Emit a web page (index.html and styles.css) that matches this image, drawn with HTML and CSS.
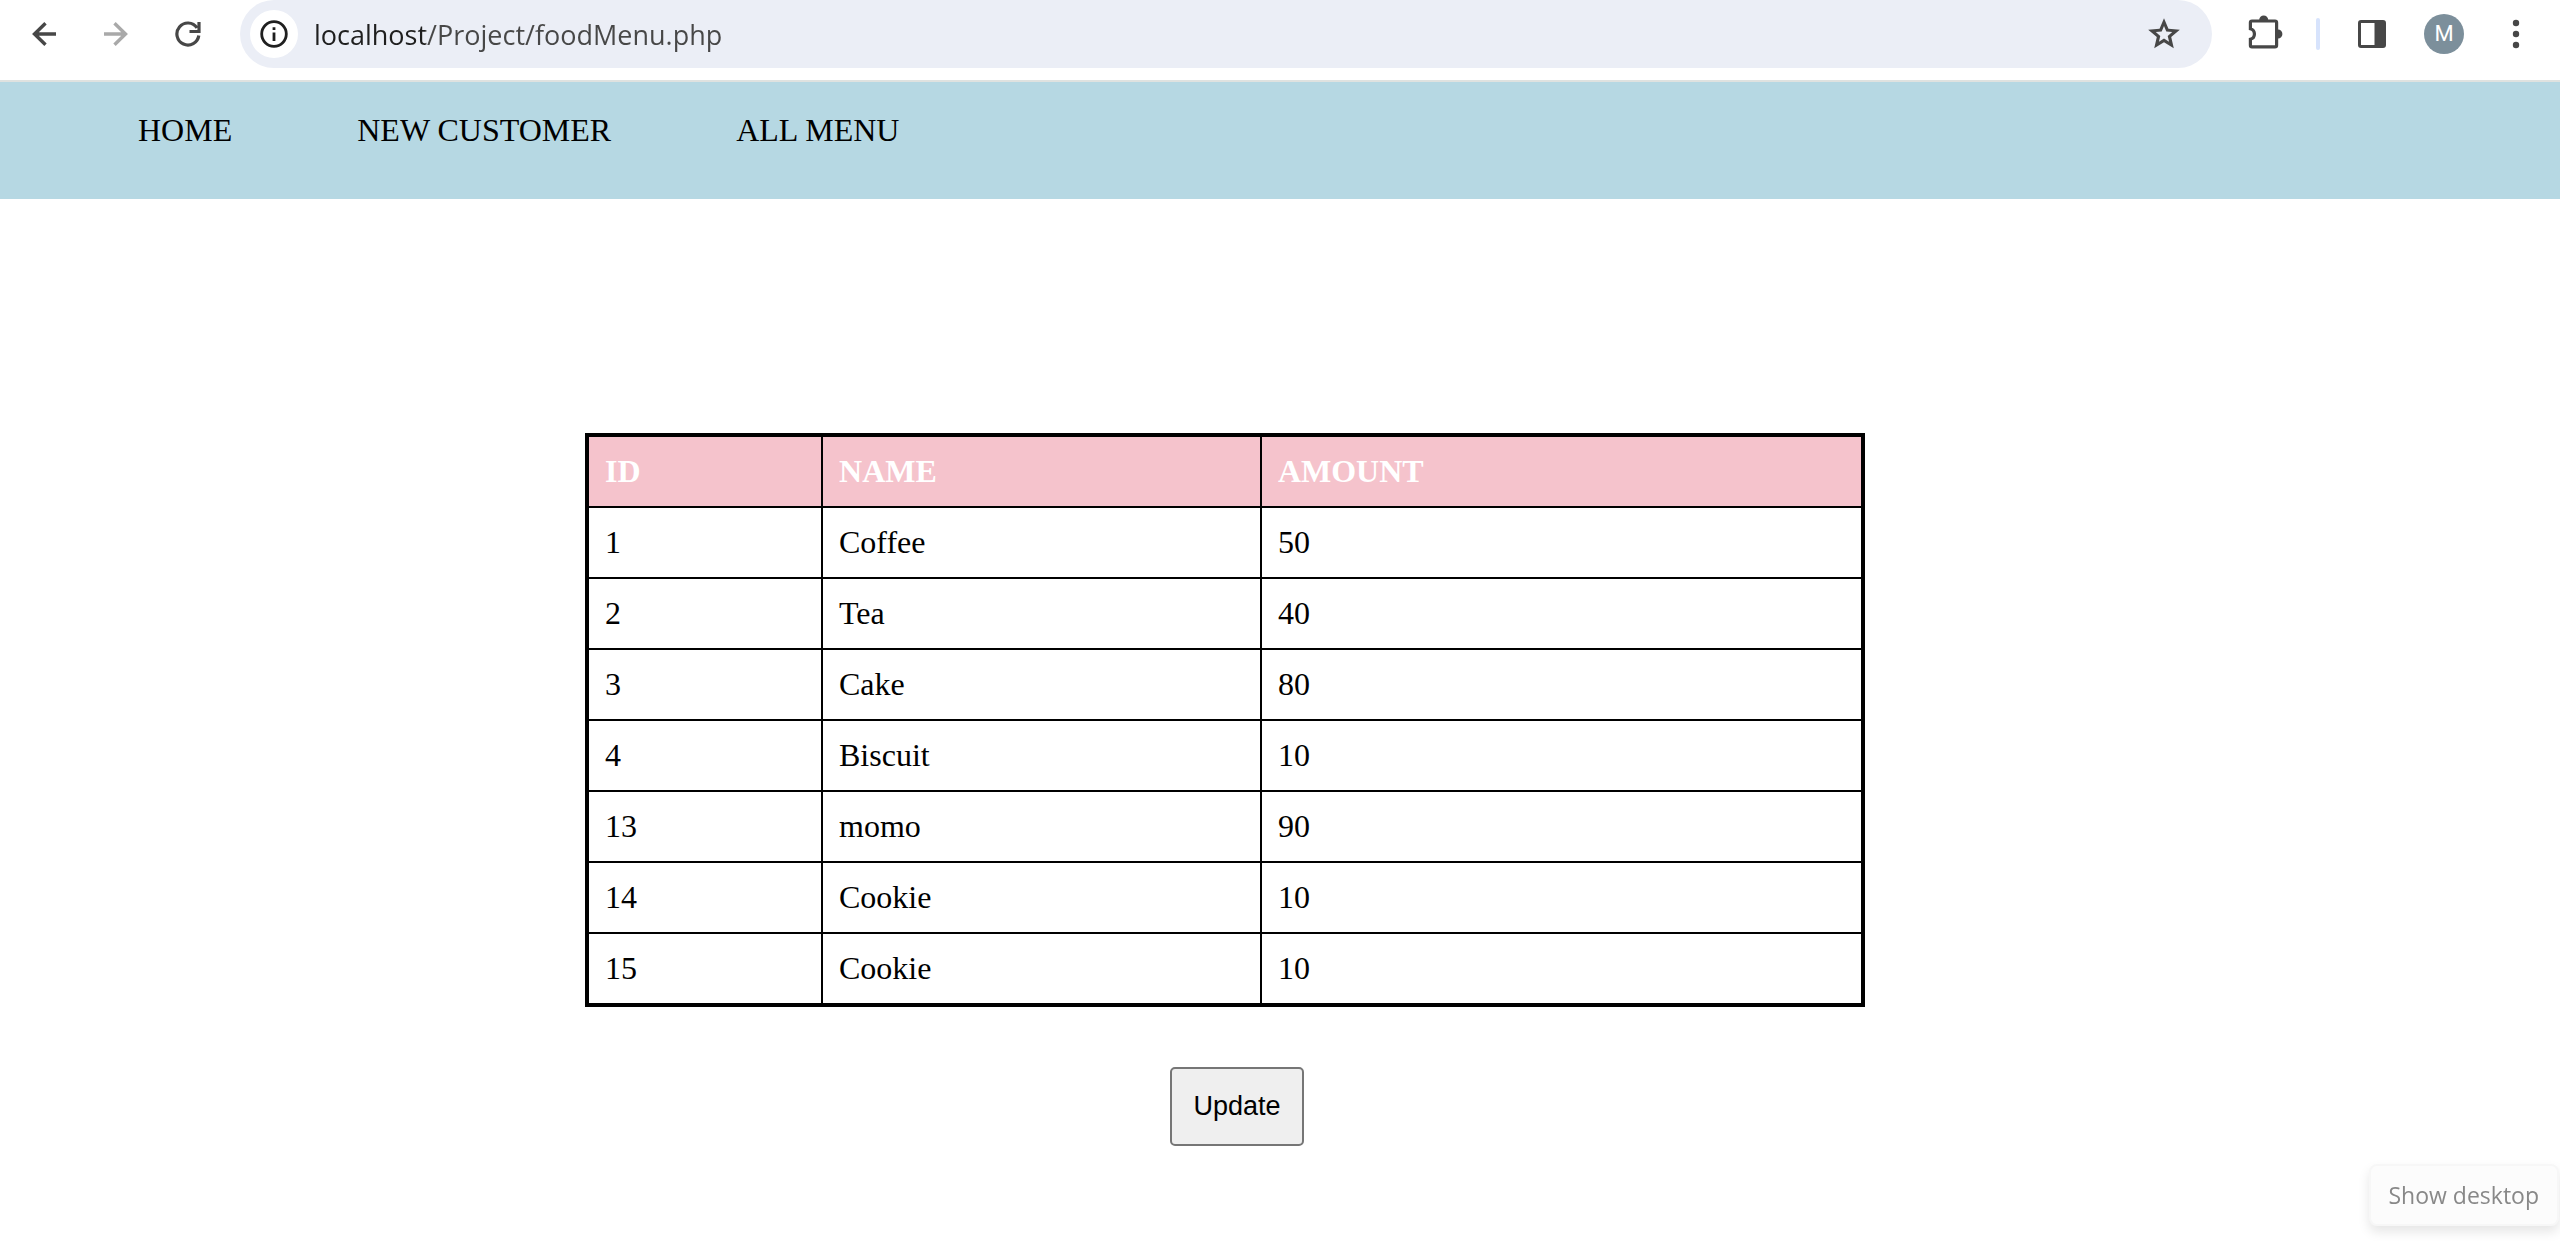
FILE: index.html
```html
<!DOCTYPE html>
<html lang="en">
<head>
<meta charset="utf-8">
<title>Food Menu</title>
<link rel="stylesheet" href="styles.css">
</head>
<body>
<header class="toolbar">
  <button class="tool" type="button" aria-label="Back">
    <svg width="24" height="24" viewBox="0 0 24 24" fill="none" stroke="#474747" stroke-width="3.400"><path d="M24 12H2M13.500 1.300L2.500 12l11 10.700"/></svg>
  </button>
  <button class="tool" type="button" aria-label="Forward">
    <svg width="24" height="24" viewBox="0 0 24 24" fill="none" stroke="#a9a9a9" stroke-width="3.400"><path d="M0 12h22M10.500 1.300l11 10.700-11 10.700"/></svg>
  </button>
  <button class="tool" type="button" aria-label="Reload">
    <svg width="26" height="26" viewBox="0 0 26 26" fill="none" stroke="#474747" stroke-width="3.200"><path d="M23.800 14.500A11 11 0 1 1 22 6.800M24 1v9.500H14.500"/></svg>
  </button>
  <div class="omnibox">
    <button class="site-info" type="button" aria-label="View site information">
      <svg width="28" height="28" viewBox="0 0 28 28"><circle cx="14" cy="14" r="12.300" fill="none" stroke="#1f1f1f" stroke-width="2.800"/><path d="M12.600 12.500h2.800V21h-2.800zM12.600 7.300h2.800v2.800h-2.800z" fill="#1f1f1f"/></svg>
    </button>
    <input class="address" type="text" aria-label="Address" value="localhost/Project/foodMenu.php">
    <button class="bookmark" type="button" aria-label="Bookmark this page">
      <svg width="38" height="38" viewBox="0 0 24 24"><path d="M22 9.240l-7.190-.62L12 2 9.190 8.630 2 9.240l5.460 4.730L5.820 21 12 17.270 18.180 21l-1.630-7.030L22 9.240zM12 14.900l-3.200 1.950.85-3.650-2.850-2.450 3.750-.33L12 6.950l1.450 3.470 3.750.33-2.850 2.450.85 3.650L12 14.900z" fill="#474747"/></svg>
    </button>
  </div>
  <button class="tool" type="button" aria-label="Extensions">
    <svg width="38" height="38" viewBox="0 0 38 38"><path d="M7 6H30q1.600 0 1.600 1.600V30.200q0 1.600-1.600 1.600H7q-1.600 0-1.600-1.600V24.300a5.500 5.500 0 0 0 0-10.600V7.600Q5.400 6 7 6z" fill="none" stroke="#474747" stroke-width="3.200"/><path d="M14.200 5a4.500 4.600 0 0 1 9 0zM33 14.500a4.400 4.500 0 0 1 0 9z" fill="#474747"/></svg>
  </button>
  <span class="divider"></span>
  <button class="tool" type="button" aria-label="Side panel">
    <svg width="30" height="30" viewBox="0 0 30 30"><rect x="2.500" y="2.500" width="25" height="25" rx="1.500" fill="none" stroke="#474747" stroke-width="3"/><path d="M17.500 2h10v26h-10z" fill="#474747"/></svg>
  </button>
  <button class="tool" type="button" aria-label="Profile"><span class="avatar">M</span></button>
  <button class="tool" type="button" aria-label="Browser menu">
    <svg width="8" height="30" viewBox="0 0 8 30" fill="#474747"><circle cx="4" cy="4" r="3.200"/><circle cx="4" cy="15" r="3.200"/><circle cx="4" cy="26" r="3.200"/></svg>
  </button>
</header>

<nav class="nav">
  <a href="#home">HOME</a>
  <a href="#customer">NEW CUSTOMER</a>
  <a href="#menu">ALL MENU</a>
</nav>

<main class="content">
  <table class="menu">
    <thead>
      <tr><th>ID</th><th>NAME</th><th>AMOUNT</th></tr>
    </thead>
    <tbody>
      <tr><td>1</td><td>Coffee</td><td>50</td></tr>
      <tr><td>2</td><td>Tea</td><td>40</td></tr>
      <tr><td>3</td><td>Cake</td><td>80</td></tr>
      <tr><td>4</td><td>Biscuit</td><td>10</td></tr>
      <tr><td>13</td><td>momo</td><td>90</td></tr>
      <tr><td>14</td><td>Cookie</td><td>10</td></tr>
      <tr><td>15</td><td>Cookie</td><td>10</td></tr>
    </tbody>
  </table>
  <button class="update" type="button">Update</button>
</main>

<div class="tooltip" role="tooltip">Show desktop</div>
</body>
</html>
```
FILE: styles.css
```css
* {
  box-sizing: border-box;
}

body {
  margin: 0;
  background: #fff;
  color: #000;
  font-family: "Liberation Serif", "Times New Roman", serif;
  font-size: 32px;
  line-height: 37px;
}

button {
  cursor: pointer;
}

/* Browser toolbar */
.toolbar {
  display: flex;
  align-items: center;
  padding: 0 8px 12px;
  border-bottom: 2px solid #dfe2e0;
}

.tool {
  display: flex;
  flex: none;
  align-items: center;
  justify-content: center;
  width: 72px;
  height: 68px;
  padding: 0;
  border: 0;
  background: none;
}

.omnibox {
  display: flex;
  flex: 1;
  align-items: center;
  height: 68px;
  margin: 0 16px;
  padding: 0 24px 0 10px;
  border-radius: 34px;
  background: #ebeef6;
}

.site-info {
  display: flex;
  flex: none;
  align-items: center;
  justify-content: center;
  width: 48px;
  height: 48px;
  padding: 0;
  border: 0;
  border-radius: 50%;
  background: #fff;
}

/* The host part of the address is darker than the path */
.address {
  flex: 1;
  min-width: 0;
  height: 48px;
  margin: 0 16px;
  padding: 0;
  border: 0;
  outline: 0;
  background: linear-gradient(90deg, #1f1f1f 111px, #474747 111px);
  background-clip: text;
  -webkit-background-clip: text;
  color: #474747;
  -webkit-text-fill-color: transparent;
  font-family: "Open Sans", "Noto Sans", sans-serif;
  font-size: 27px;
}

.bookmark {
  display: flex;
  flex: none;
  align-items: center;
  justify-content: center;
  width: 48px;
  height: 48px;
  padding: 0;
  border: 0;
  background: none;
}

.divider {
  flex: none;
  width: 4px;
  height: 32px;
  margin: 0 16px;
  border-radius: 2px;
  background: #d7e3fc;
}

.avatar {
  width: 40px;
  height: 40px;
  border-radius: 50%;
  background: #7c8f9b;
  color: #fff;
  font-family: Roboto, sans-serif;
  font-size: 22px;
  line-height: 40px;
  text-align: center;
}

/* Site navigation */
.nav {
  display: flex;
  gap: 125px;
  padding: 30px 138px 50px;
  background: #b6d8e3;
}

.nav a {
  color: #000;
  text-decoration: none;
}

/* Menu table */
.content {
  display: flex;
  flex-direction: column;
  align-items: center;
  width: 50%;
  margin: 234px 0 0 585px;
}

.menu {
  width: 100%;
  border: 4px solid #000;
  border-collapse: collapse;
}

.menu th,
.menu td {
  padding: 16px;
  border: 2px solid #000;
  text-align: left;
}

.menu th {
  background: #f5c3cc;
  color: #fff;
}

.update {
  margin: 60px 0 60px 24px;
  padding: 20px 21px;
  border: 2px solid #767676;
  border-radius: 5px;
  background: #efefef;
  color: #000;
  font-family: "Liberation Sans", Arial, sans-serif;
  font-size: 27px;
  line-height: 35px;
}

.tooltip {
  position: fixed;
  right: 1px;
  bottom: 15px;
  padding: 12px 18px;
  border: 2px solid #f7f7f7;
  border-radius: 8px;
  background: #fcfcfc;
  box-shadow: 0 6px 12px rgba(0, 0, 0, 0.1);
  color: #888;
  font-family: "Open Sans", "Noto Sans", sans-serif;
  font-size: 23px;
  line-height: 34px;
}
```
